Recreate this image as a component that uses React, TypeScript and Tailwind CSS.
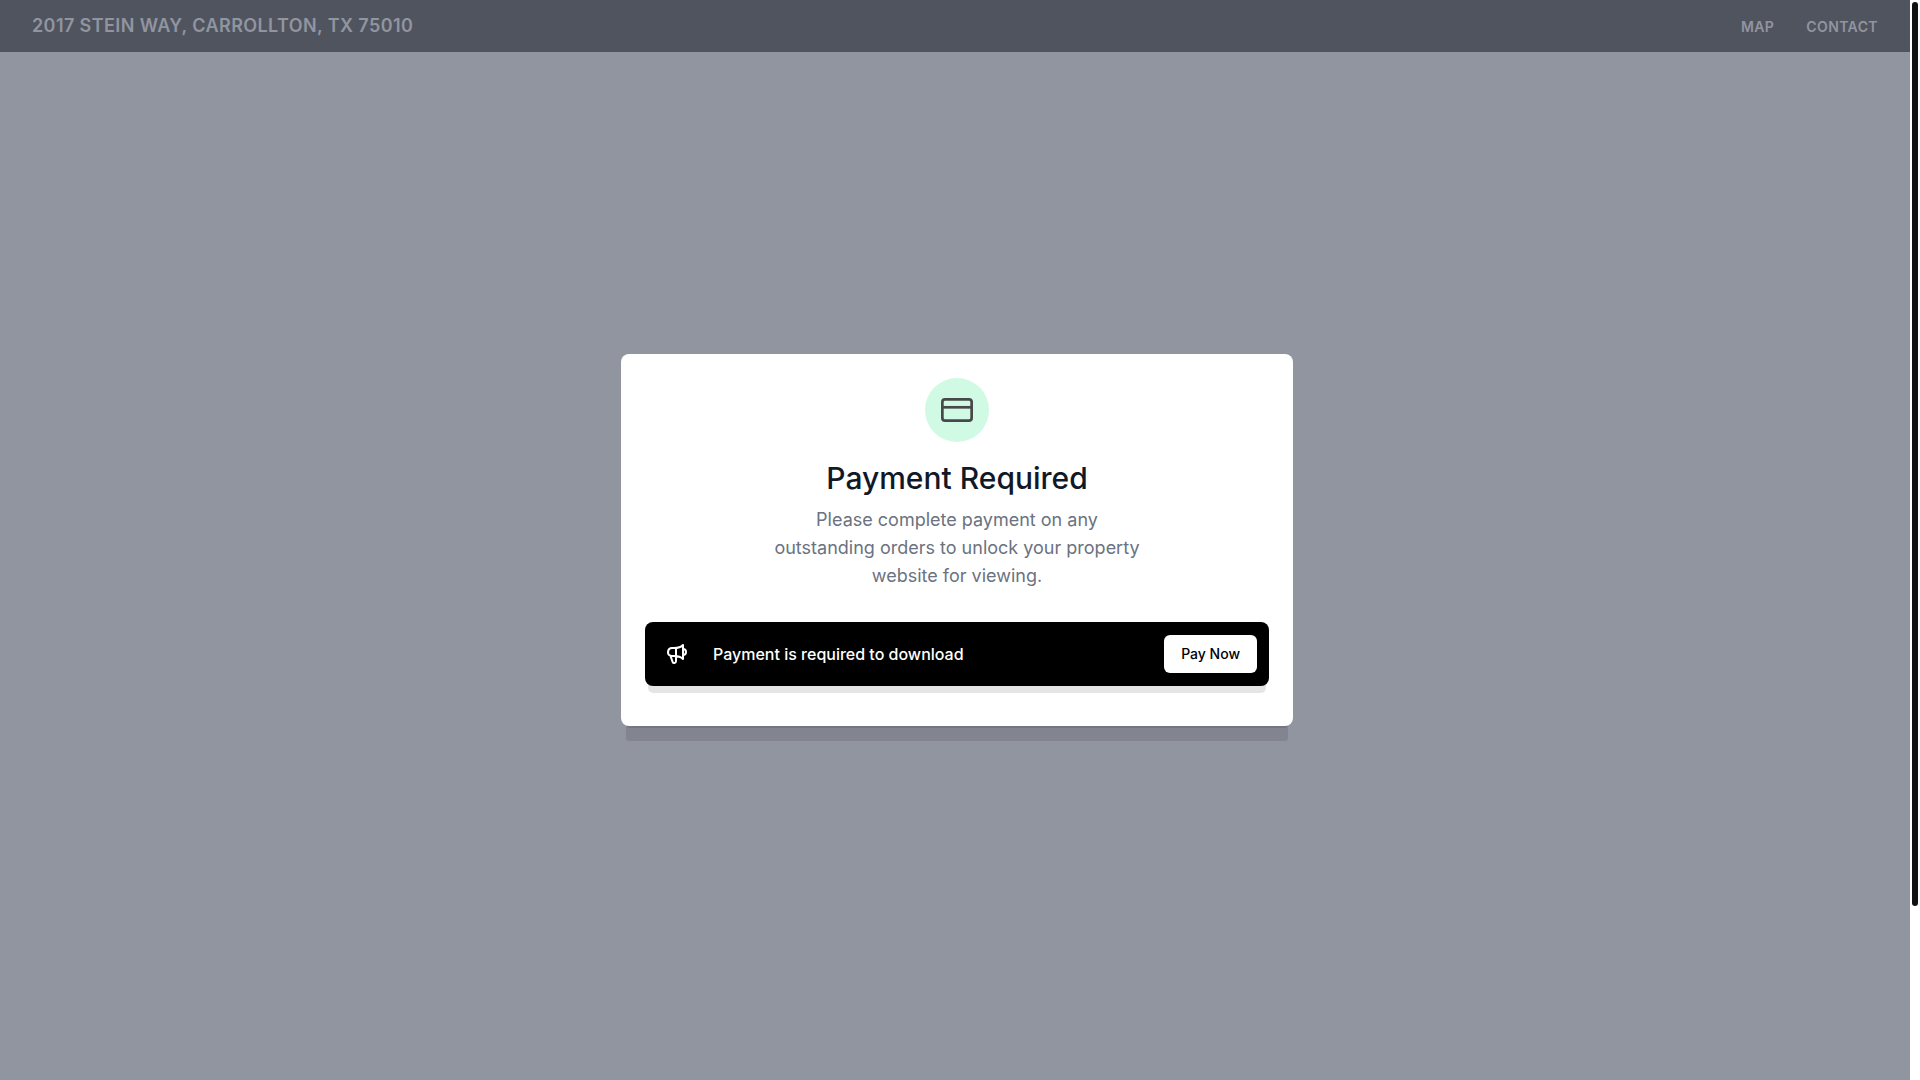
import React from 'react';

const navLinks = [
    { label: 'MAP', href: '#map' },
    { label: 'CONTACT', href: '#contact' },
];

const CardIcon: React.FC = () => (
    <svg className="w-8 h-6" fill="none" viewBox="0 0 32 24" stroke="currentColor" strokeWidth={2.7} aria-hidden="true">
        <rect x="1.35" y="1.35" width="29.3" height="21.3" rx="2.7" />
        <path d="M1 9.3h30" />
    </svg>
);

const MegaphoneIcon: React.FC = () => (
    <svg className="w-6 h-6" fill="none" viewBox="0 0 24 24" stroke="currentColor" aria-hidden="true">
        <path
            strokeLinecap="round"
            strokeLinejoin="round"
            strokeWidth={2}
            d="M11 5.882V19.24a1.76 1.76 0 01-3.417.592l-2.147-6.15M18 13a3 3 0 100-6M5.436 13.683A4.001 4.001 0 017 6h1.832c4.1 0 7.625-1.234 9.168-3v14c-1.543-1.766-5.067-3-9.168-3H7a3.988 3.988 0 01-1.564-.317z"
        />
    </svg>
);

const Header: React.FC = () => (
    <header className="h-13 px-8 flex items-center justify-between bg-[#50545f] text-[#9195a0] font-semibold tracking-wide">
        <h1 className="text-lg leading-6">2017 STEIN WAY, CARROLLTON, TX 75010</h1>
        <nav className="flex gap-8 pt-0.5 text-sm">
            {navLinks.map((link) => (
                <a key={link.label} href={link.href}>{link.label}</a>
            ))}
        </nav>
    </header>
);

const PaymentModal: React.FC = () => (
    <div role="dialog" aria-labelledby="modal-title" className="w-full max-w-2xl bg-white rounded-lg px-6 pt-6 pb-10 shadow-[0_20px_0_-5px_rgba(0,0,0,0.1),0_8px_0_-6px_rgba(0,0,0,0.1)]">
        <div className="w-16 h-16 mx-auto flex items-center justify-center rounded-full bg-[#d1fae5] text-[#47484b]">
            <CardIcon />
        </div>

        <div className="text-center">
            <h2 id="modal-title" className="mt-4 text-3xl leading-10 font-medium text-[#111827]">Payment Required</h2>
            <p className="mt-2 max-w-96 mx-auto text-lg text-[#6b7280]">
                Please complete payment on any outstanding orders to unlock your property website for viewing.
            </p>
        </div>

        {/* Call to action */}
        <div className="mt-8 h-16 pl-5 pr-3 flex items-center rounded-lg bg-black text-white shadow-[0_10px_0_-3px_rgba(0,0,0,0.1)]">
            <MegaphoneIcon />
            <p className="ml-6 flex-1 font-medium">Payment is required to download</p>
            <button type="button" className="px-4 py-2 border border-transparent rounded-md bg-white text-black text-sm font-medium">
                Pay Now
            </button>
        </div>
    </div>
);

const App: React.FC = () => {
    return (
        <div className="min-h-screen flex font-['Inter',sans-serif] bg-[#9195a0]">
            <div className="flex-1 flex flex-col">
                <Header />
                <main className="flex-1 flex items-center justify-center pl-1 pb-13">
                    <PaymentModal />
                </main>
            </div>

            {/* Scrollbar */}
            <div className="w-2.5 p-0.5 bg-white">
                <div className="h-[904px] rounded-full bg-[#111111]" />
            </div>
        </div>
    );
};

export default App;
